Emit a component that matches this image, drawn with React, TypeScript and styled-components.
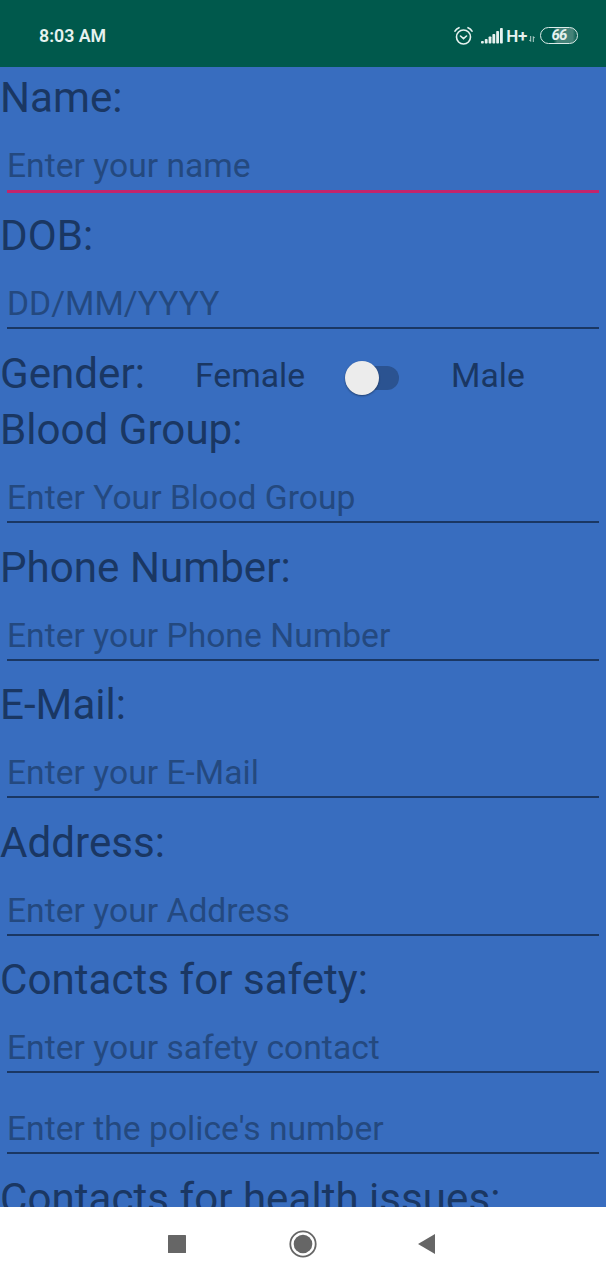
import React from "react";
import styled, { createGlobalStyle } from "styled-components";

const Global = createGlobalStyle`
  html, body { margin: 0; padding: 0; }
  body { font-family: Roboto, "Liberation Sans", sans-serif; overflow: hidden; }
`;

const Screen = styled.div`
  width: 606px;
  height: 1280px;
  display: flex;
  flex-direction: column;
  background: #386dbf;
  overflow: hidden;
`;

const StatusBar = styled.header`
  flex: none;
  height: 67px;
  box-sizing: border-box;
  padding: 4px 28px 0 39px;
  display: flex;
  align-items: center;
  justify-content: space-between;
  background: #00594c;
  color: #e6f2ef;
`;

const Clock = styled.span`
  font-size: 17.8px;
  font-weight: 600;
  line-height: 24px;
`;

const StatusIcons = styled.div`
  display: flex;
  align-items: center;
`;

const Network = styled.span`
  margin-left: 3px;
  font-size: 17px;
  font-weight: 600;
  line-height: 24px;
  letter-spacing: -0.3px;
`;

const Battery = styled.span`
  width: 38px;
  height: 17px;
  box-sizing: border-box;
  margin-left: 5px;
  border: 1.5px solid #dcebe8;
  border-radius: 9px;
  background: linear-gradient(90deg, #00594c 0 35%, #458278 45% 88%, #00594c 100%);
  font-size: 15px;
  font-weight: 700;
  font-style: italic;
  line-height: 15.5px;
  letter-spacing: -0.8px;
  text-align: center;
`;

const Form = styled.main`
  flex: 1;
  min-height: 0;
  overflow: hidden;
`;

const Label = styled.label`
  display: block;
  box-sizing: border-box;
  height: 56.4px;
  padding-top: 3.4px;
  font-size: 42.15px;
  line-height: 56px;
  color: #1a3763;
  white-space: nowrap;
`;

const Field = styled.div`
  box-sizing: border-box;
  height: 81.2px;
  padding: 18px 7px 0;
`;

const Input = styled.input<{ $active?: boolean }>`
  display: block;
  width: 100%;
  height: ${(p) => (p.$active ? 51.6 : 50)}px;
  box-sizing: border-box;
  margin: 0;
  padding: ${(p) => (p.$active ? "6px 0 5.6px" : "6px 0 5px")};
  border: 0;
  border-bottom: ${(p) => (p.$active ? "3px solid #c2256c" : "2px solid #1a3763")};
  border-radius: 0;
  outline: 0;
  background: transparent;
  font: 33.65px Roboto, "Liberation Sans", sans-serif;
  color: #1a3763;
  &::placeholder { color: #24497f; opacity: 1; }
`;

const GenderRow = styled.div`
  display: flex;
  height: 56.4px;
`;

const GenderLabel = styled(Label)`
  width: 195px;
`;

const Option = styled.span<{ $width: number }>`
  width: ${(p) => p.$width}px;
  padding-top: 9.6px;
  font-size: 33.7px;
  line-height: 48px;
  color: #1a3763;
`;

const Switch = styled.button`
  width: 56px;
  height: 34px;
  margin: 19px 51px 0 0;
  padding: 5px 1.5px 5px 13.5px;
  border: 0;
  background: transparent;
`;

const Track = styled.span`
  position: relative;
  display: block;
  height: 24px;
  border-radius: 12px;
  background: #2b5391;
`;

const Thumb = styled.span`
  position: absolute;
  left: -13px;
  top: -5px;
  width: 34px;
  height: 34px;
  border-radius: 50%;
  background: #ececec;
  box-shadow: 0 1px 2px rgba(0, 0, 0, 0.4);
`;

const NavBar = styled.nav`
  flex: none;
  height: 73px;
  background: #fff;
  display: flex;
  align-items: center;
  justify-content: center;
  svg { display: block; }
`;

const AlarmIcon = () => (
  <svg width="19" height="20" viewBox="0 0 19 20" fill="none" stroke="currentColor" strokeWidth="1.6" strokeLinecap="round">
    <circle cx="9.5" cy="11" r="7" />
    <path d="M6.5 10l3 2.6 3-2.6M1 5.2Q2.3 2.8 5 1.7M18 5.2Q16.7 2.8 14 1.7" />
  </svg>
);

const SignalIcon = () => (
  <svg width="22" height="16" viewBox="0 0 22 16" fill="currentColor" style={{ marginLeft: 8 }}>
    <rect x="0" y="13" width="2.8" height="2.5" rx=".8" />
    <rect x="3.8" y="11" width="2.8" height="4.5" rx=".8" />
    <rect x="7.6" y="8.5" width="2.8" height="7" rx=".8" />
    <rect x="11.4" y="6" width="2.8" height="9.5" rx=".8" />
    <rect x="15.2" y="3" width="2.8" height="12.5" rx=".8" />
    <rect x="19" y="0" width="2.8" height="15.5" rx=".8" />
  </svg>
);

const DataIcon = () => (
  <svg width="6" height="6" viewBox="0 0 6 6" fill="none" stroke="currentColor" strokeWidth=".8" style={{ margin: "7px 0 0 2px" }}>
    <path d="M1.7 0v5.4M.2 3.8l1.5 1.6M4.3 6V.6M5.8 2.2L4.3.6" />
  </svg>
);

const Entry = ({ label, hint, active }: { label?: string; hint: string; active?: boolean }) => (
  <>
    {label && <Label>{label}</Label>}
    <Field>
      <Input placeholder={hint} $active={active} />
    </Field>
  </>
);

export default function App() {
  return (
    <Screen>
      <Global />
      <StatusBar>
        <Clock>8:03 AM</Clock>
        <StatusIcons>
          <AlarmIcon />
          <SignalIcon />
          <Network>H+</Network>
          <DataIcon />
          <Battery>66</Battery>
        </StatusIcons>
      </StatusBar>
      <Form>
        <Entry label="Name:" hint="Enter your name" active />
        <Entry label="DOB:" hint="DD/MM/YYYY" />
        <GenderRow>
          <GenderLabel>Gender:</GenderLabel>
          <Option $width={149}>Female</Option>
          <Switch aria-label="Gender">
            <Track>
              <Thumb />
            </Track>
          </Switch>
          <Option $width={100}>Male</Option>
        </GenderRow>
        <Entry label="Blood Group:" hint="Enter Your Blood Group" />
        <Entry label="Phone Number:" hint="Enter your Phone Number" />
        <Entry label="E-Mail:" hint="Enter your E-Mail" />
        <Entry label="Address:" hint="Enter your Address" />
        <Entry label="Contacts for safety:" hint="Enter your safety contact" />
        <Entry hint="Enter the police's number" />
        <Label>Contacts for health issues:</Label>
      </Form>
      <NavBar>
        <svg width="270" height="30" viewBox="0 0 270 30" fill="#666" style={{ marginLeft: -1 }}>
          <rect x="0" y="6" width="18" height="18" rx=".6" />
          <circle cx="135" cy="15" r="9.3" />
          <circle cx="135" cy="15" r="12.7" fill="none" stroke="#666" strokeWidth="1.8" />
          <path d="M250 15L267 5V25Z" />
        </svg>
      </NavBar>
    </Screen>
  );
}
